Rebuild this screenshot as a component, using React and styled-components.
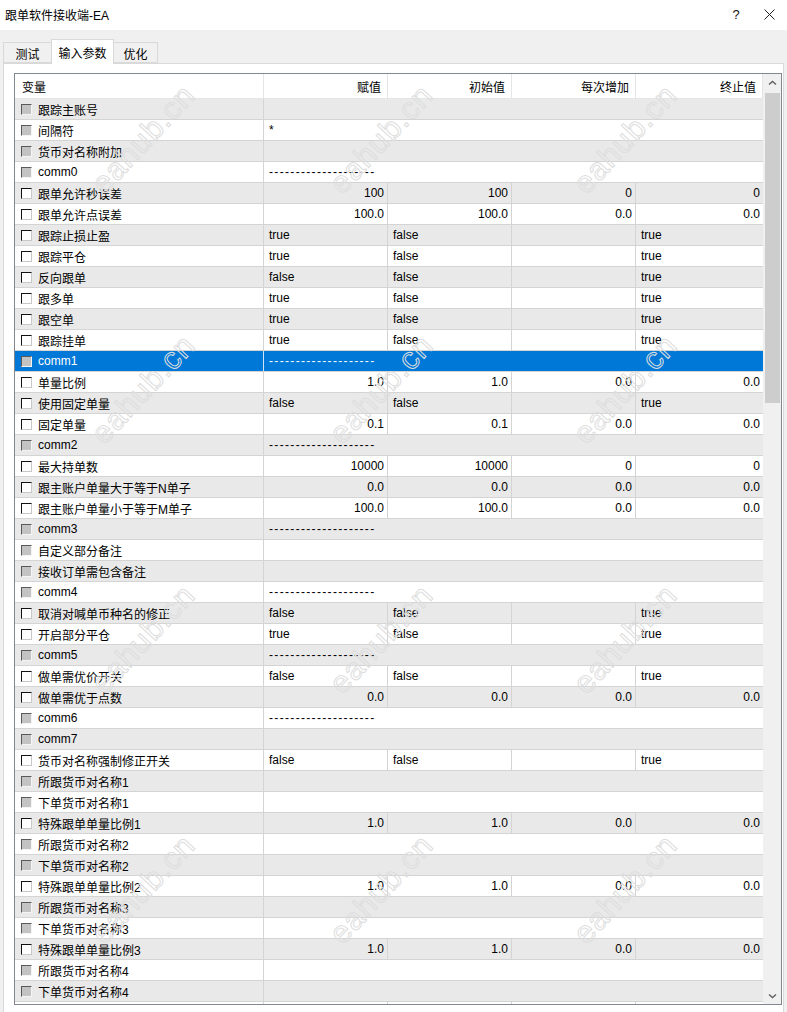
import React from 'react';
import styled, { createGlobalStyle } from 'styled-components';

const GlobalStyle = createGlobalStyle`
  html, body {
    margin: 0;
    padding: 0;
    background: #f0f0f0;
  }
  body {
    font-family: "Liberation Sans", "Noto Sans CJK SC", Arial, sans-serif;
    font-size: 12px;
    color: #000;
  }
`;

const Window = styled.div`
  width: 787px;
  height: 1012px;
  display: flex;
  flex-direction: column;
  background: #f0f0f0;
  overflow: hidden;
`;

const TitleBar = styled.div`
  height: 30px;
  flex: none;
  background: #fff;
  display: flex;
  align-items: center;
  padding: 0 8px 2px 5px;
  box-sizing: border-box;
`;

const Title = styled.div`
  flex: 1;
  font-size: 12px;
`;

const TitleButton = styled.div`
  width: ${p => p.$w}px;
  display: flex;
  justify-content: center;
  align-items: center;
  font-size: 13px;
  color: #111;
`;

const TabStrip = styled.div`
  height: 33px;
  flex: none;
  display: flex;
  align-items: flex-end;
  padding-left: 3px;
  position: relative;
  z-index: 2;
`;

const Tab = styled.div`
  height: ${p => (p.$active ? '25px' : '21px')};
  margin-bottom: ${p => (p.$active ? '-1px' : '0')};
  padding: 0 ${p => (p.$active ? '6px' : '4px')};
  box-sizing: border-box;
  background: ${p => (p.$active ? '#fff' : '#f0f0f0')};
  border: 1px solid #d9d9d9;
  border-bottom: ${p => (p.$active ? 'none' : '1px solid #d9d9d9')};
  margin-left: ${p => (p.$first ? '0' : '-1px')};
  display: flex;
  align-items: center;
  padding-top: ${p => (p.$active ? '0' : '1px')};
  font-size: 12px;
  min-width: ${p => p.$w}px;
  justify-content: center;
`;

const Panel = styled.div`
  flex: 1;
  margin: 0 3px;
  background: #fff;
  border: 1px solid #d9d9d9;
  border-bottom: none;
  padding: 9px 2px 0 10px;
  min-height: 0;
  display: flex;
  flex-direction: column;
`;

const Table = styled.div`
  width: 768px;
  height: 932px;
  box-sizing: border-box;
  border: 1px solid #828790;
  display: flex;
  position: relative;
  overflow: hidden;
`;

const Body = styled.div`
  width: 748px;
  flex: none;
  overflow: hidden;
`;

const COLS = '249px 124px 124px 124px 127px';

const HeaderRow = styled.div`
  display: grid;
  grid-template-columns: ${COLS};
  height: 25px;
  background: #fff;
  border-bottom: 1px solid #e5e5e5;
  box-sizing: border-box;
`;

const HeaderCell = styled.div`
  display: flex;
  align-items: center;
  justify-content: ${p => (p.$left ? 'flex-start' : 'flex-end')};
  padding: ${p => (p.$left ? '0 0 0 7px' : '0 6px 0 0')};
  border-right: 1px solid #e5e5e5;
  font-size: 12px;
`;

const Row = styled.div`
  display: grid;
  grid-template-columns: ${COLS};
  height: 21px;
  box-sizing: border-box;
  border-bottom: 1px solid #d4d4d4;
  background: ${p => (p.$selected ? '#0078d7' : p.$odd ? '#fff' : '#e9e9e9')};
  color: ${p => (p.$selected ? '#fff' : '#000')};
`;

const NameCell = styled.div`
  display: flex;
  align-items: center;
  gap: 6px;
  padding-left: 6px;
  border-right: 1px solid ${p => (p.$selected ? '#cfe3f5' : '#d4d4d4')};
  white-space: nowrap;
  overflow: hidden;
`;

const Check = styled.span`
  width: 11px;
  height: 11px;
  flex: none;
  box-sizing: border-box;
  border: 1px solid;
  border-color: ${p => (p.$gray ? '#5a5a5a #f4f4f4 #f4f4f4 #5a5a5a' : '#111 #c8c8c8 #c8c8c8 #111')};
  background: ${p => (p.$gray ? '#c3c3c3' : '#fff')};
  margin-top: 1px;
`;

const Cell = styled.div`
  display: flex;
  align-items: center;
  justify-content: ${p => (p.$right ? 'flex-end' : 'flex-start')};
  padding: ${p => (p.$right ? '0 3px 0 0' : '0 0 0 5px')};
  border-right: ${p => (p.$last ? 'none' : '1px solid #d4d4d4')};
  white-space: nowrap;
  overflow: hidden;
`;

const SpanCell = styled.div`
  grid-column: 2 / 6;
  display: flex;
  align-items: center;
  padding-left: 5px;
  white-space: nowrap;
  letter-spacing: ${p => (p.$dash ? '1.33px' : '0')};
`;

const ScrollBar = styled.div`
  flex: 1;
  background: #f0f0f0;
  display: flex;
  flex-direction: column;
  align-items: center;
`;

const Arrow = styled.div`
  height: 17px;
  flex: none;
  display: flex;
  align-items: center;
  justify-content: center;
  width: 100%;
`;

const Thumb = styled.div`
  width: 15px;
  height: 310px;
  background: #cdcdcd;
  margin-top: 2px;
`;

const Track = styled.div`
  flex: 1;
`;

const Watermark = styled.div`
  position: absolute;
  left: ${p => p.$x}px;
  top: ${p => p.$y}px;
  transform: translate(-50%, -50%) rotate(-47deg);
  font-family: "Liberation Sans", Arial, sans-serif;
  font-size: 31px;
  line-height: 1;
  color: transparent;
  -webkit-text-stroke: 1px #dedede;
  pointer-events: none;
  white-space: nowrap;
  letter-spacing: 1px;
`;

const DASH = '--------------------';

// s: string param, n: numeric param, b: bool param
const rows = [
  ['s', '跟踪主账号', ''],
  ['s', '间隔符', '*'],
  ['s', '货币对名称附加', ''],
  ['s', 'comm0', DASH],
  ['n', '跟单允许秒误差', '100', '100', '0', '0'],
  ['n', '跟单允许点误差', '100.0', '100.0', '0.0', '0.0'],
  ['b', '跟踪止损止盈', 'true', 'false', '', 'true'],
  ['b', '跟踪平仓', 'true', 'false', '', 'true'],
  ['b', '反向跟单', 'false', 'false', '', 'true'],
  ['b', '跟多单', 'true', 'false', '', 'true'],
  ['b', '跟空单', 'true', 'false', '', 'true'],
  ['b', '跟踪挂单', 'true', 'false', '', 'true'],
  ['s', 'comm1', DASH],
  ['n', '单量比例', '1.0', '1.0', '0.0', '0.0'],
  ['b', '使用固定单量', 'false', 'false', '', 'true'],
  ['n', '固定单量', '0.1', '0.1', '0.0', '0.0'],
  ['s', 'comm2', DASH],
  ['n', '最大持单数', '10000', '10000', '0', '0'],
  ['n', '跟主账户单量大于等于N单子', '0.0', '0.0', '0.0', '0.0'],
  ['n', '跟主账户单量小于等于M单子', '100.0', '100.0', '0.0', '0.0'],
  ['s', 'comm3', DASH],
  ['s', '自定义部分备注', ''],
  ['s', '接收订单需包含备注', ''],
  ['s', 'comm4', DASH],
  ['b', '取消对喊单币种名的修正', 'false', 'false', '', 'true'],
  ['b', '开启部分平仓', 'true', 'false', '', 'true'],
  ['s', 'comm5', DASH],
  ['b', '做单需优价开关', 'false', 'false', '', 'true'],
  ['n', '做单需优于点数', '0.0', '0.0', '0.0', '0.0'],
  ['s', 'comm6', DASH],
  ['s', 'comm7', ''],
  ['b', '货币对名称强制修正开关', 'false', 'false', '', 'true'],
  ['s', '所跟货币对名称1', ''],
  ['s', '下单货币对名称1', ''],
  ['n', '特殊跟单单量比例1', '1.0', '1.0', '0.0', '0.0'],
  ['s', '所跟货币对名称2', ''],
  ['s', '下单货币对名称2', ''],
  ['n', '特殊跟单单量比例2', '1.0', '1.0', '0.0', '0.0'],
  ['s', '所跟货币对名称3', ''],
  ['s', '下单货币对名称3', ''],
  ['n', '特殊跟单单量比例3', '1.0', '1.0', '0.0', '0.0'],
  ['s', '所跟货币对名称4', ''],
  ['s', '下单货币对名称4', ''],
  ['e', '', '', '', '', ''],
];

const SELECTED = 12;

const marks = [];
[65, 315, 565, 815].forEach(y => {
  [128, 366, 610].forEach(x => marks.push([x, y]));
});

const Chevron = ({ down }) => (
  <svg width="9" height="6" viewBox="0 0 9 6">
    <path
      d={down ? 'M1 1.5 L4.5 4.5 L8 1.5' : 'M1 4.5 L4.5 1.5 L8 4.5'}
      fill="none"
      stroke="#606060"
      strokeWidth="1.4"
    />
  </svg>
);

const ParamRow = ({ row, index }) => {
  const [kind, name, ...vals] = row;
  const selected = index === SELECTED;
  return (
    <Row $odd={index % 2 === 1} $selected={selected}>
      <NameCell $selected={selected}>
        {kind !== 'e' && <Check $gray={kind === 's'} />}
        {name}
      </NameCell>
      {kind === 's' ? (
        <SpanCell $dash={vals[0] === DASH}>{vals[0]}</SpanCell>
      ) : (
        vals.map((v, i) => (
          <Cell key={i} $right={kind === 'n'} $last={i === 3}>
            {v}
          </Cell>
        ))
      )}
    </Row>
  );
};

export default function App() {
  return (
    <>
      <GlobalStyle />
      <Window>
        <TitleBar>
          <Title>跟单软件接收端-EA</Title>
          <TitleButton $w={46}>?</TitleButton>
          <TitleButton $w={20}>
            <svg width="11" height="11" viewBox="0 0 11 11">
              <path d="M0.5 0.5 L10.5 10.5 M10.5 0.5 L0.5 10.5" stroke="#222" strokeWidth="1" />
            </svg>
          </TitleButton>
        </TitleBar>
        <TabStrip>
          <Tab $first $w={49}>测试</Tab>
          <Tab $active $w={63}>输入参数</Tab>
          <Tab $w={45}>优化</Tab>
        </TabStrip>
        <Panel>
          <Table>
            <Body>
              <HeaderRow>
                <HeaderCell $left>变量</HeaderCell>
                <HeaderCell>赋值</HeaderCell>
                <HeaderCell>初始值</HeaderCell>
                <HeaderCell>每次增加</HeaderCell>
                <HeaderCell>终止值</HeaderCell>
              </HeaderRow>
              {rows.map((r, i) => (
                <ParamRow key={i} row={r} index={i} />
              ))}
            </Body>
            <ScrollBar>
              <Arrow>
                <Chevron />
              </Arrow>
              <Thumb />
              <Track />
              <Arrow>
                <Chevron down />
              </Arrow>
            </ScrollBar>
            {marks.map(([x, y], i) => (
              <Watermark key={i} $x={x} $y={y}>
                eahub.cn
              </Watermark>
            ))}
          </Table>
        </Panel>
      </Window>
    </>
  );
}
